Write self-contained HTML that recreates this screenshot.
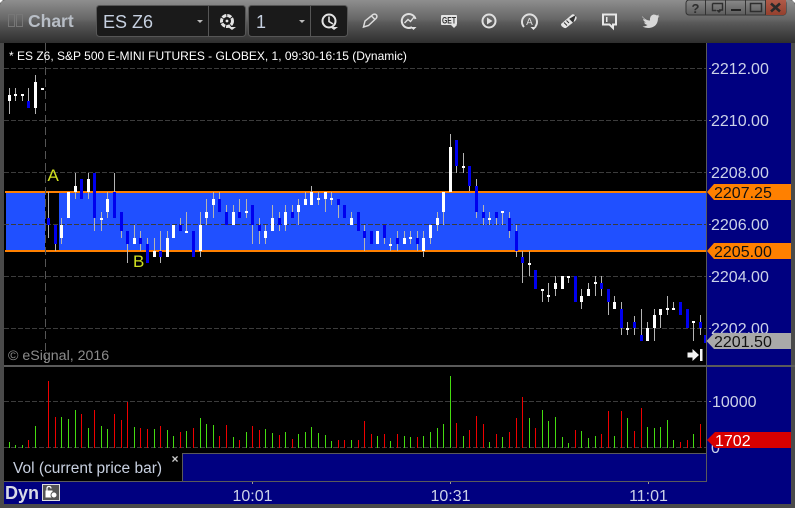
<!DOCTYPE html>
<html><head><meta charset="utf-8"><style>
html,body{margin:0;padding:0;background:#4a4a4a}
#w{position:relative;width:795px;height:508px;overflow:hidden;background:#4a4a4a}
svg{position:absolute;left:0;top:0}
text{font-family:"Liberation Sans",sans-serif}
</style></head><body><div id="w">
<svg width="795" height="508" viewBox="0 0 795 508">
<defs>
<linearGradient id="tb" x1="0" y1="0" x2="0" y2="1"><stop offset="0" stop-color="#8e8e8e"/><stop offset=".45" stop-color="#666"/><stop offset=".52" stop-color="#5a5a5a"/><stop offset="1" stop-color="#2e2e2e"/></linearGradient>
<linearGradient id="btn" x1="0" y1="0" x2="0" y2="1"><stop offset="0" stop-color="#8a8a8a"/><stop offset="1" stop-color="#5c5c5c"/></linearGradient>
<linearGradient id="cl" x1="0" y1="0" x2="0" y2="1"><stop offset="0" stop-color="#b05a48"/><stop offset="1" stop-color="#94402e"/></linearGradient>
</defs>
<rect width="795" height="508" fill="#4a4a4a"/>
<path d="M0 6Q0 0 6 0H789Q795 0 795 6V43H0Z" fill="url(#tb)"/>
<path d="M0 0h3l-3 3ZM795 0h-3l3 3Z" fill="#fff"/>

<!-- window buttons -->
<rect x="686" y="0" width="100" height="15" rx="3" fill="url(#btn)" stroke="#333"/>
<path d="M766 0H786V12Q786 15 783 15H766Z" fill="url(#cl)"/>
<path d="M705.5 0V15M725.5 0V15M745.5 0V15M765.5 0V15" stroke="#333" shape-rendering="crispEdges"/>
<text x="695.5" y="13" font-size="13" font-weight="bold" text-anchor="middle" fill="#2e2e2e">?</text>
<path d="M712.5 3.5H722.5V10H719M712.5 3.5V10.5H716" fill="none" stroke="#2e2e2e" stroke-width="1.4"/>
<path d="M716 10H722L719 13Z" fill="#2e2e2e"/>
<rect x="731" y="9" width="10" height="2" fill="#222"/>
<rect x="750.5" y="3.5" width="11" height="8" fill="none" stroke="#2e2e2e" stroke-width="1.5"/>
<path d="M771 3.5L780 11.5M780 3.5L771 11.5" stroke="#2a2a2a" stroke-width="2.6"/>

<!-- left title -->
<rect x="8.5" y="14.5" width="6" height="12" fill="none" stroke="#777"/>
<rect x="16.5" y="14.5" width="6" height="12" fill="none" stroke="#777"/>
<text x="28" y="27" font-size="17.5" font-weight="bold" fill="#b8bec6">Chart</text>

<!-- combos -->
<rect x="96.5" y="5.5" width="149" height="31" rx="3" fill="#1a1a1a" stroke="#565656"/>
<path d="M208.5 6V36" stroke="#565656"/>
<text x="103" y="28" font-size="18" fill="#c6d0e0">ES Z6</text>
<path d="M197 20H203L200 23Z" fill="#bbb"/>
<circle cx="227" cy="21" r="5.5" fill="none" stroke="#e4e4e4" stroke-width="3" stroke-dasharray="4.3 .9"/>
<circle cx="227" cy="21" r="1.4" fill="#e4e4e4"/>
<path d="M228 27H236L232 30Z" fill="#e0e0e0"/>
<rect x="248.5" y="5.5" width="99" height="31" rx="3" fill="#1a1a1a" stroke="#565656"/>
<path d="M310.5 6V36" stroke="#565656"/>
<text x="256" y="28" font-size="18" fill="#c6d0e0">1</text>
<path d="M299 20H305L302 23Z" fill="#bbb"/>
<circle cx="329" cy="21" r="6.5" fill="none" stroke="#e4e4e4" stroke-width="2"/>
<path d="M329 16.5V21.5L333 24" fill="none" stroke="#e4e4e4" stroke-width="1.6"/>
<path d="M330 27H338L334 30Z" fill="#e0e0e0"/>

<!-- toolbar icons -->
<path d="M363.5 27L365 21L373 14.5Q375 13.5 376.5 15Q377.5 17 376 18.5L368.5 25.5ZM371.5 16L375 19.5" fill="none" stroke="#dcdcdc" stroke-width="1.5"/>
<path d="M415.5 19A7 7 0 1 0 412 27.2" fill="none" stroke="#e0e0e0" stroke-width="2"/>
<path d="M404.5 23L408 19.5L410.5 21.5L414 17" fill="none" stroke="#e0e0e0" stroke-width="1.4"/>
<path d="M410.5 27H416.5L413.5 30Z" fill="#e4e4e4"/>
<rect x="441" y="15" width="16" height="10" rx="1" fill="#e4e4e4"/>
<text x="449" y="23.5" font-size="9" font-weight="bold" text-anchor="middle" fill="#333" textLength="14" lengthAdjust="spacingAndGlyphs">GET</text>
<path d="M451 25H457L454 28Z" fill="#e4e4e4"/>
<circle cx="489" cy="21" r="6.5" fill="none" stroke="#e0e0e0" stroke-width="2"/>
<path d="M487 17.500L492.500 21L487 24.500Z" fill="#e0e0e0"/>
<path d="M535 27A7.500 7.500 0 1 0 524 27" fill="none" stroke="#e0e0e0" stroke-width="2"/>
<text x="529.500" y="25" font-size="10" text-anchor="middle" fill="#e0e0e0">A</text>
<path d="M530.500 27H536.500L533.500 30Z" fill="#e4e4e4"/>
<path d="M561 24L572 14.500Q574 13.500 576.500 17Q577 19 575 21L566 28Q564 28.500 561.500 26Q561 25 561 24Z" fill="#e6e6e6"/>
<path d="M564 22.500L567 25.500M569 23L566.500 20.500M570 19L573 22L575 16Z" fill="#333" stroke="#333"/>
<path d="M603 14.500H616V24.500H613V28L609.500 24.500H603Z" fill="none" stroke="#e8e8e8" stroke-width="2"/>
<rect x="606" y="17" width="1.500" height="5" fill="#e8e8e8"/>
<path d="M642 16Q645.500 20.500 650 20.500Q649.500 15.500 653.500 14.500Q655.500 14.500 657 15.500L659 14.500L658 16.500L659.500 16L658 18Q658 27 649 28Q645 28 642.500 26.500Q645.500 26.500 647.500 25Q645 24.500 644 22.500Q645 22.500 646 22.300Q643.500 21.500 643 19Q644 19.500 645 19.500Q642 17.500 642 16Z" fill="#d8d8d8"/>

<!-- chart panels -->
<rect x="4" y="43" width="702" height="322" fill="#000"/>
<rect x="4" y="367" width="702" height="86" fill="#000"/>
<rect x="4" y="453" width="178" height="28" fill="#000"/>
<rect x="707" y="43" width="84" height="322" fill="#000080"/>
<rect x="707" y="367" width="84" height="137" fill="#000080"/>
<rect x="183" y="454" width="523" height="27" fill="#000080"/>
<rect x="4" y="482" width="703" height="22" fill="#000080"/>

<g shape-rendering="crispEdges">
<!-- band -->
<rect x="6" y="193" width="700" height="57" fill="#2050ff"/>
<rect x="45" y="193" width="14" height="57" fill="#000"/>
<rect x="5" y="191" width="701" height="2" fill="#ff8000"/>
<rect x="5" y="250" width="701" height="2" fill="#ff8000"/>

<!-- grid -->
<path d="M4 68.500H706M4 120.500H706M4 172.500H706M4 224.500H706M4 276.500H706M4 328.500H706" stroke="#3c3c3c" stroke-dasharray="5 2" fill="none"/>
<path d="M4 401.500H706M4 447.500H706" stroke="#3c3c3c" stroke-dasharray="5 2" fill="none"/>
<path d="M45.500 43V365" stroke="#555" stroke-dasharray="8 4" fill="none"/>

<!-- wicks -->
<path fill="none" stroke="#b4b4b4" d="M9.500 88V114M15.500 88V101M22.500 94V101M28.500 88V108M35.500 75V114M48.500 192V238M55.500 225V251M61.500 218V244M75.500 173V199M88.500 173V199M94.500 218V231M101.500 212V231M107.500 192V218M114.500 173V192M121.500 231V238M127.500 244V263M134.500 225V244M140.500 231V251M147.500 238V263M154.500 238V257M160.500 231V263M167.500 231V257M180.500 218V231M186.500 212V233M200.500 212V257M206.500 199V225M213.500 192V218M219.500 192V212M226.500 205V225M233.500 205V225M239.500 199V218M246.500 199V218M252.500 225V244M259.500 218V244M265.500 225V244M272.500 205V231M279.500 212V231M285.500 205V231M292.500 205V218M298.500 199V225M305.500 192V205M311.500 186V205M318.500 192V205M325.500 192V212M331.500 192V205M338.500 205V218M351.500 212V225M364.500 225V251M384.500 238V244M390.500 238V251M397.500 231V251M404.500 231V244M410.500 231V244M417.500 231V251M423.500 231V257M430.500 238V244M437.500 212V231M443.500 192V225M450.500 134V147M456.500 166V173M463.500 153V173M469.500 186V191M476.500 179V218M483.500 205V225M489.500 212V225M496.500 212V225M502.500 211V225M509.500 212V238M516.500 225V257M522.500 251V283M529.500 251V276M542.500 289V302M548.500 283V302M555.500 276V296M568.500 276V283M581.500 289V309M588.500 283V296M595.500 276V296M601.500 276V296M608.500 302V315M614.500 296V309M621.500 302V335M627.500 322V335M634.500 316V335M641.500 309V341M647.500 322V341M654.500 309V341M660.500 309V328M667.500 296V315M673.500 302V309M693.500 321V341M700.500 315V335"/>
<!-- white bodies -->
<path fill="none" stroke="#fff" stroke-width="3" d="M9.500 95V101M15.500 94V96M22.500 94V96M35.500 82V108M42.500 88V90M61.500 225V238M68.500 192V218M75.500 186V192M88.500 179V192M101.500 218V220M107.500 199V212M134.500 238V244M154.500 251V257M167.500 238V257M173.500 225V238M186.500 231V233M200.500 225V251M206.500 212V218M213.500 199V205M233.500 212V225M246.500 211V213M265.500 231V238M272.500 218V231M285.500 212V225M298.500 205V212M305.500 199V205M311.500 192V205M318.500 198V200M325.500 192V199M331.500 198V200M351.500 218V225M377.500 231V244M390.500 244V246M404.500 238V244M410.500 237V239M423.500 238V251M430.500 225V238M437.500 218V225M443.500 192V212M450.500 147V192M463.500 166V168M489.500 218V220M502.500 211V213M529.500 263V265M542.500 289V291M548.500 295V297M555.500 283V289M562.500 276V289M568.500 276V278M581.500 296V302M588.500 289V296M595.500 282V284M614.500 302V309M627.500 328V330M647.500 328V341M654.500 315V328M660.500 309V315M667.500 308V310M673.500 308V310M693.500 321V323"/>
<!-- blue bodies -->
<path fill="none" stroke="#0000ee" stroke-width="3" d="M28.500 101V108M48.500 218V225M55.500 225V244M81.500 179V199M94.500 173V218M114.500 192V218M121.500 212V231M127.500 231V244M140.500 238V244M147.500 244V263M160.500 251V257M180.500 225V231M193.500 231V257M219.500 199V212M226.500 212V225M239.500 212V218M252.500 205V225M259.500 225V231M279.500 218V225M292.500 212V218M338.500 199V205M344.500 205V218M358.500 212V231M364.500 231V238M371.500 231V244M384.500 225V238M397.500 238V244M417.500 238V244M456.500 140V166M469.500 166V186M476.500 186V212M483.500 212V218M496.500 212V218M509.500 218V231M516.500 231V251M522.500 257V263M535.500 270V289M575.500 276V302M601.500 283V289M608.500 289V302M621.500 309V328M634.500 322V328M641.500 335V341M680.500 302V315M687.500 309V328M700.500 322V328"/>
<rect x="704" y="335" width="2" height="8" fill="#0000ee"/>

<!-- volume -->
<path fill="none" stroke="#44dc10" d="M9.500 442V448M15.500 445V448M22.500 445V448M35.500 426V448M61.500 417V448M68.500 419V448M75.500 410V448M88.500 428V448M101.500 426V448M107.500 429V448M134.500 427V448M154.500 429V448M167.500 430V448M173.500 436V448M186.500 431V448M200.500 418V448M206.500 424V448M213.500 425V448M233.500 437V448M246.500 432V448M265.500 429V448M272.500 433V448M285.500 432V448M298.500 434V448M305.500 432V448M311.500 427V448M318.500 433V448M325.500 435V448M331.500 441V448M351.500 440V448M377.500 436V448M390.500 441V448M404.500 436V448M410.500 437V448M423.500 436V448M430.500 432V448M437.500 428V448M443.500 424V448M450.500 376V448M463.500 436V448M489.500 442V448M502.500 437V448M529.500 418V448M542.500 410V448M548.500 421V448M555.500 417V448M562.500 437V448M568.500 443V448M581.500 431V448M588.500 438V448M595.500 436V448M614.500 436V448M627.500 418V448M647.500 427V448M654.500 428V448M660.500 427V448M667.500 420V448M673.500 440V448M693.500 434V448"/>
<path fill="none" stroke="#ee0000" d="M28.500 440V448M48.500 381V448M55.500 417V448M81.500 414V448M94.500 410V448M114.500 414V448M121.500 420V448M127.500 402V448M140.500 428V448M147.500 429V448M160.500 426V448M180.500 432V448M193.500 428V448M219.500 436V448M226.500 425V448M239.500 440V448M252.500 426V448M259.500 430V448M279.500 435V448M292.500 439V448M338.500 440V448M344.500 440V448M358.500 440V448M364.500 421V448M371.500 434V448M384.500 434V448M397.500 434V448M417.500 437V448M456.500 423V448M469.500 430V448M476.500 416V448M483.500 424V448M496.500 434V448M509.500 432V448M516.500 418V448M522.500 397V448M535.500 428V448M575.500 430V448M601.500 434V448M608.500 411V448M621.500 411V448M634.500 431V448M641.500 408V448M680.500 442V448M687.500 440V448M700.500 424V448"/>

<!-- structural lines -->
<path fill="none" stroke="#5a5a5a" d="M706.500 43V481M182.500 453V481M182 453.500H707M4 481.500H707"/>
<path fill="none" stroke="#5a5a5a" stroke-width="2" d="M4 366H795"/>
<path fill="none" stroke="#999" d="M709 68.500H711M709 120.500H711M709 172.500H711M709 224.500H711M709 276.500H711M709 328.500H711M709 401.500H711M252.500 482V484M450.500 482V484M648.500 482V484"/>
</g>

<!-- end arrow -->
<path d="M687.500 352.500H692.500V349L699 355L692.500 361V357.500H687.500Z" fill="#f4f4f4"/>
<rect x="700" y="349" width="2.500" height="12" fill="#f4f4f4"/>

<!-- text in chart -->
<text x="9" y="60" font-size="12" fill="#fff">* ES Z6, S&amp;P 500 E-MINI FUTURES - GLOBEX, 1, 09:30-16:15 (Dynamic)</text>
<text x="8" y="360" font-size="14.200" fill="#8c8c8c">© eSignal, 2016</text>
<text x="47.500" y="181" font-size="17" fill="#d0e020">A</text>
<text x="133" y="267" font-size="17" fill="#d0e020">B</text>

<!-- axis -->
<g font-size="16" fill="#ccd2e8">
<text x="711" y="74">2212.00</text>
<text x="711" y="126">2210.00</text>
<text x="711" y="178">2208.00</text>
<text x="711" y="230">2206.00</text>
<text x="711" y="282">2204.00</text>
<text x="711" y="334">2202.00</text>
<text x="712" y="407">10000</text>
<text x="711" y="453">0</text>
</g>
<path d="M707 192L714 184H791V200H714Z" fill="#ff8000"/>
<path d="M707 251L714 243H791V259H714Z" fill="#ff8000"/>
<path d="M706.500 341L714 333H791V349H714Z" fill="#a9a9a9"/>
<path d="M707 440L715 432H791V448H715Z" fill="#d80000"/>
<g font-size="16" fill="#111">
<text x="714" y="198">2207.25</text>
<text x="714" y="257">2205.00</text>
<text x="714" y="347">2201.50</text>
</g>
<text x="715" y="446" font-size="16" fill="#fff">1702</text>

<!-- vol label -->
<text x="13" y="473" font-size="15.500" fill="#c8d0e0">Vol (current price bar)</text>
<text x="175" y="463" font-size="12" font-weight="bold" text-anchor="middle" fill="#ccc">×</text>

<!-- time axis -->
<g font-size="16" fill="#ccd2e8" text-anchor="middle">
<text x="252.500" y="501">10:01</text>
<text x="450.500" y="501">10:31</text>
<text x="648.500" y="501">11:01</text>
</g>
<text x="5" y="499" font-size="18" font-weight="bold" fill="#d8dae6">Dyn</text>
<rect x="42.500" y="484.500" width="17" height="16" fill="#555" stroke="#ddd"/>
<path d="M47 490.500V488.500Q47 486.500 49 486.500Q51 486.500 51 488.500" fill="none" stroke="#fff" stroke-width="1.200"/>
<rect x="45.500" y="490.500" width="7" height="7" fill="#fff"/>
<circle cx="54" cy="495" r="3" fill="#fff" stroke="#555"/>
</svg>
</div></body></html>
